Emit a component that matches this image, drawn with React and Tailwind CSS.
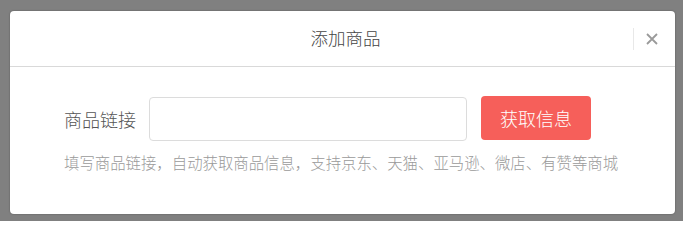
import React from 'react';

const font = { fontFamily: '"Noto Sans CJK SC", "Noto Sans", sans-serif' };

const App = () => {
  return (
    <div className="w-[683px] h-[221px] bg-[#808080] pt-[11px] pl-[10px] overflow-hidden" style={font}>
      <div className="w-[665px] h-[203px] bg-white rounded-[4px] shadow-[0_0_2px_rgba(0,0,0,0.35)]">
        <div className="relative h-[56px] border-b border-[#d9d9d9] flex items-center justify-center">
          <span className="text-[17.5px] font-light text-[#444] ml-[6px]">添加商品</span>
          <div className="absolute right-[17px] top-0 h-full flex items-center">
            <div className="w-px h-[22px] bg-[#e8e8e8] mr-[12px]" />
            <svg width="12" height="12" viewBox="0 0 12 12">
              <path d="M1 1L11 11M11 1L1 11" stroke="#9a9a9a" strokeWidth="1.8" />
            </svg>
          </div>
        </div>
        <div className="pl-[54px] pt-[30px]">
          <div className="flex items-center">
            <span className="text-[18px] font-light text-[#555] w-[85px]">商品链接</span>
            <input className="w-[318px] h-[44px] border border-[#dcdcdc] rounded-[4px] outline-none px-3" />
            <button className="ml-[14px] w-[110px] h-[44px] bg-[#f65f5a] rounded-[4px] text-white text-[18px] font-light -mt-[2px]">
              获取信息
            </button>
          </div>
          <p className="mt-[10px] text-[15.4px] font-light text-[#9a9a9a]">
            填写商品链接，自动获取商品信息，支持京东、天猫、亚马逊、微店、有赞等商城
          </p>
        </div>
      </div>
    </div>
  );
};

export default App;
